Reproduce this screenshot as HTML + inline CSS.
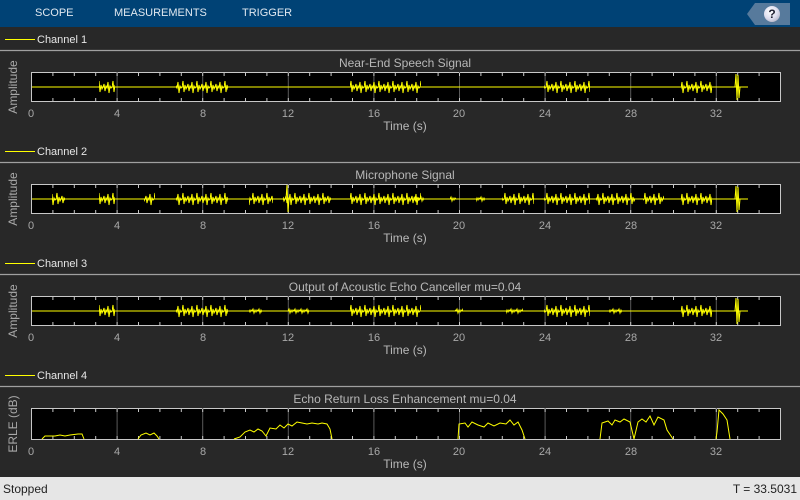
<!DOCTYPE html>
<html><head><meta charset="utf-8"><style>
*{margin:0;padding:0;box-sizing:border-box}
body{width:800px;height:500px;background:#282828;font-family:"Liberation Sans",sans-serif;position:relative;overflow:hidden}
.tb{position:absolute;left:0;top:0;width:800px;height:27px;background:#004275}
.tb span{position:absolute;top:7px;color:#e0e8f0;font-size:11px}
.help{position:absolute;left:755px;top:3px;width:35px;height:22px;background:#577a9c}
.helpt{position:absolute;left:747px;top:3px;width:0;height:0;border-top:11px solid transparent;border-bottom:11px solid transparent;border-right:8px solid #577a9c}
.q{position:absolute;left:764px;top:6px;width:16px;height:16px;border-radius:50%;background:radial-gradient(circle at 40% 35%,#fff,#dde 50%,#99a);color:#223;font-weight:bold;font-size:12px;text-align:center;line-height:16px}
.status{position:absolute;left:0;top:477px;width:800px;height:23px;background:#e6e6e6;color:#222;font-size:12px}
svg{position:absolute;left:0;top:0}
text{font-family:"Liberation Sans",sans-serif}
</style></head><body>
<div class="tb"><span style="left:35px">SCOPE</span><span style="left:114px">MEASUREMENTS</span><span style="left:242px">TRIGGER</span></div>
<div class="helpt"></div><div class="help"></div><div class="q">?</div>
<svg width="800" height="477" xmlns="http://www.w3.org/2000/svg">
<defs>
<pattern id="zb" patternUnits="userSpaceOnUse" x="0" y="0" width="14" height="30"><polyline points="0,15 1,9 2,20 3,13 4,17 5,15 6,12 7,19 8,14 9,16 10,10 11,21 12,14 13,16 14,15" fill="none" stroke="#ff0" stroke-width="1"/></pattern>
<pattern id="zs" patternUnits="userSpaceOnUse" x="0" y="0" width="6" height="30"><polyline points="0,15 1,13 2,17 3,14 4,16 5,14 6,15" fill="none" stroke="#ff0" stroke-width="1"/></pattern>
<g id="ax">
<rect x="31.5" y="0.5" width="749" height="29" fill="#000" stroke="#c8c8c8"/>
<g stroke="#5a5a5a"><path d="M117.1 0V29M202.7 0V29M288.3 0V29M373.9 0V29M459.5 0V29M545.1 0V29M630.7 0V29M716.3 0V29"/></g>
</g>
<g id="tk" stroke="#c8c8c8">
<path d="M52.9 1v3M74.3 1v3M95.7 1v3M117.1 1v3M138.5 1v3M159.9 1v3M181.3 1v3M202.7 1v3M224.1 1v3M245.5 1v3M266.9 1v3M288.3 1v3M309.7 1v3M331.1 1v3M352.5 1v3M373.9 1v3M395.3 1v3M416.7 1v3M438.1 1v3M459.5 1v3M480.9 1v3M502.3 1v3M523.7 1v3M545.1 1v3M566.5 1v3M587.9 1v3M609.3 1v3M630.7 1v3M652.1 1v3M673.5 1v3M694.9 1v3M716.3 1v3M737.7 1v3M759.1 1v3"/>
</g>
<g id="lb" fill="#a8a8a8" font-size="11" text-anchor="middle">
<text x="31">0</text><text x="117">4</text><text x="203">8</text><text x="288">12</text><text x="374">16</text><text x="459">20</text><text x="545">24</text><text x="631">28</text><text x="716">32</text>
</g>
</defs>

<g>
<line x1="5" y1="39.5" x2="35" y2="39.5" stroke="#ff0"/><text x="37" y="43" fill="#e6e6e6" font-size="11">Channel 1</text>
<line x1="0" y1="50.5" x2="800" y2="50.5" stroke="#a0a0a0" stroke-width="1.2"/>
<line x1="5" y1="151.5" x2="35" y2="151.5" stroke="#ff0"/><text x="37" y="155" fill="#e6e6e6" font-size="11">Channel 2</text>
<line x1="0" y1="162.5" x2="800" y2="162.5" stroke="#a0a0a0" stroke-width="1.2"/>
<line x1="5" y1="263.5" x2="35" y2="263.5" stroke="#ff0"/><text x="37" y="267" fill="#e6e6e6" font-size="11">Channel 3</text>
<line x1="0" y1="274.5" x2="800" y2="274.5" stroke="#a0a0a0" stroke-width="1.2"/>
<line x1="5" y1="375.5" x2="35" y2="375.5" stroke="#ff0"/><text x="37" y="379" fill="#e6e6e6" font-size="11">Channel 4</text>
<line x1="0" y1="386.5" x2="800" y2="386.5" stroke="#a0a0a0" stroke-width="1.2"/>
</g>

<!-- plot 1 -->
<g transform="translate(0,72)">
<use href="#ax"/><use href="#tk"/><use href="#tk" transform="translate(0,25)"/>
<line x1="32" y1="15" x2="748" y2="15" stroke="#ff0"/>
<g fill="url(#zb)">
<rect x="99" y="2" width="16" height="26"/><rect x="176" y="2" width="52" height="26"/><rect x="350" y="2" width="71" height="26"/><rect x="544" y="2" width="46" height="26"/><rect x="681" y="2" width="31" height="26"/>
</g>
<path d="M735 15L736 2L737 28L738 3L739 26L740 15" fill="none" stroke="#ff0"/>
<use href="#lb" transform="translate(0,45)"/>
</g>
<text x="405" y="67" fill="#b8b8b8" font-size="12" text-anchor="middle">Near-End Speech Signal</text>
<text transform="translate(17,87) rotate(-90)" fill="#a8a8a8" font-size="12" text-anchor="middle">Amplitude</text>
<text x="405" y="130" fill="#b8b8b8" font-size="12" text-anchor="middle">Time (s)</text>

<!-- plot 2 -->
<g transform="translate(0,184)">
<use href="#ax"/><use href="#tk"/><use href="#tk" transform="translate(0,25)"/>
<line x1="32" y1="15" x2="748" y2="15" stroke="#ff0"/>
<g fill="url(#zb)">
<rect x="52" y="2" width="13" height="26"/><rect x="99" y="2" width="16" height="26"/><rect x="144" y="2" width="11" height="26"/><rect x="176" y="2" width="52" height="26"/><rect x="249" y="2" width="24" height="26"/><rect x="283" y="2" width="48" height="26"/><rect x="350" y="2" width="71" height="26"/><rect x="502" y="2" width="32" height="26"/><rect x="544" y="2" width="46" height="26"/><rect x="596" y="2" width="39" height="26"/><rect x="643" y="2" width="21" height="26"/><rect x="681" y="2" width="31" height="26"/>
</g>
<g fill="url(#zs)"><rect x="450" y="2" width="6" height="26"/><rect x="476" y="2" width="9" height="26"/><rect x="414" y="2" width="10" height="26"/></g>
<path d="M286 15L287 1L288 28L289 15M735 15L736 2L737 28L738 3L739 26L740 15" fill="none" stroke="#ff0"/>
<use href="#lb" transform="translate(0,45)"/>
</g>
<text x="405" y="179" fill="#b8b8b8" font-size="12" text-anchor="middle">Microphone Signal</text>
<text transform="translate(17,199) rotate(-90)" fill="#a8a8a8" font-size="12" text-anchor="middle">Amplitude</text>
<text x="405" y="242" fill="#b8b8b8" font-size="12" text-anchor="middle">Time (s)</text>

<!-- plot 3 -->
<g transform="translate(0,296)">
<use href="#ax"/><use href="#tk"/><use href="#tk" transform="translate(0,25)"/>
<line x1="32" y1="15" x2="748" y2="15" stroke="#ff0"/>
<g fill="url(#zb)">
<rect x="99" y="2" width="16" height="26"/><rect x="176" y="2" width="52" height="26"/><rect x="350" y="2" width="71" height="26"/><rect x="544" y="2" width="46" height="26"/><rect x="681" y="2" width="31" height="26"/>
</g>
<g fill="url(#zs)"><rect x="249" y="2" width="13" height="26"/><rect x="288" y="2" width="21" height="26"/><rect x="455" y="2" width="8" height="26"/><rect x="506" y="2" width="17" height="26"/><rect x="609" y="2" width="13" height="26"/></g>
<path d="M735 15L736 2L737 28L738 3L739 26L740 15" fill="none" stroke="#ff0"/>
<use href="#lb" transform="translate(0,45)"/>
</g>
<text x="405" y="291" fill="#b8b8b8" font-size="12" text-anchor="middle">Output of Acoustic Echo Canceller mu=0.04</text>
<text transform="translate(17,311) rotate(-90)" fill="#a8a8a8" font-size="12" text-anchor="middle">Amplitude</text>
<text x="405" y="354" fill="#b8b8b8" font-size="12" text-anchor="middle">Time (s)</text>

<!-- plot 4 -->
<g transform="translate(0,408)">
<rect x="31.5" y="0.5" width="749" height="31" fill="#000" stroke="#c8c8c8"/>
<g stroke="#5a5a5a"><path d="M117.1 0V31M202.7 0V31M288.3 0V31M373.9 0V31M459.5 0V31M545.1 0V31M630.7 0V31M716.3 0V31"/></g>
<use href="#tk"/><use href="#tk" transform="translate(0,27)"/>
<g fill="none" stroke="#ff0" stroke-width="1">
<path d="M42 31 L45 28 L55 28 L60 27 L65 28 L70 27 L78 26 L82 26 L84 31"/>
<path d="M138 31 L141 27 L146 25 L150 27 L154 25 L157 28 L159 31"/>
<path d="M234 31 L240 29 L245 24 L250 22 L254 24 L258 21 L262 23 L266 28 L270 20 L276 21 L280 17 L284 20 L288 16 L292 18 L297 14 L302 15 L307 16 L312 15 L318 16 L322 15 L327 16 L330 21 L332 31"/>
<path d="M458 31 L459 16 L465 15 L468 19 L472 14 L478 17 L484 19 L488 15 L494 18 L500 15 L506 16 L510 12 L514 17 L518 14 L522 22 L525 31"/>
<path d="M600 31 L602 15 L608 13 L612 17 L615 12 L620 14 L624 11 L630 14 L634 31 L638 14 L642 11 L646 14 L650 8 L654 17 L658 9 L664 12 L667 22 L673 31"/>
<path d="M716 31 L717 24 L719 2 L723 6 L727 12 L730 31"/>
</g>
<use href="#lb" transform="translate(0,47)"/>
</g>
<text x="405" y="403" fill="#b8b8b8" font-size="12" text-anchor="middle">Echo Return Loss Enhancement mu=0.04</text>
<text transform="translate(17,424) rotate(-90)" fill="#a8a8a8" font-size="12" text-anchor="middle">ERLE (dB)</text>
<text x="405" y="468" fill="#b8b8b8" font-size="12" text-anchor="middle">Time (s)</text>
</svg>
<div class="status"><span style="position:absolute;left:3px;top:5px">Stopped</span><span style="position:absolute;right:3px;top:5px">T = 33.5031</span></div>
</body></html>
